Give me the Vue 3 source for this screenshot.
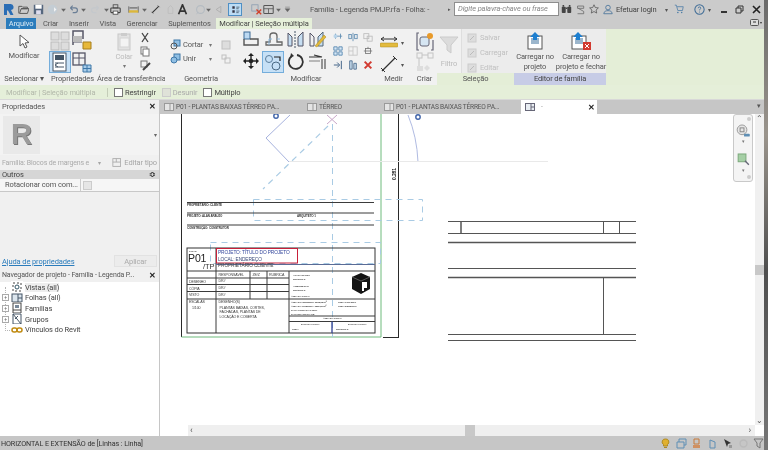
<script setup>
const caret = '<path d="M4 6h6L7 10z" fill="#666"/>'
const qat = [
  { w: 14, d: '<path d="M1 12V3h4l1 1h6v2H4l-2 6h10l2-6H4" fill="none" stroke="#555" stroke-width="1.200"/>' },
  { w: 16, d: '<rect x="1" y="1" width="12" height="12" fill="#56677e"/><rect x="3" y="1" width="8" height="5" fill="#fff"/><rect x="4" y="8" width="6" height="5" fill="#dde"/>' },
  { w: 12, d: '<circle cx="7" cy="7" r="6" fill="#c4cdd4"/><path d="M9 4l3 3-3 3z" fill="#f4f4f4"/>' },
  { w: 10, d: caret },
  { w: 10, d: '<path d="M3 5h6a3 3 0 010 6H6M3 5l3-3M3 5l3 3" fill="none" stroke="#6b7f96" stroke-width="1.500"/>' },
  { w: 10, d: caret },
  { w: 14, d: '<path d="M11 5H5a3 3 0 000 6h3M11 5L8 2M11 5L8 8" fill="none" stroke="#c4c8cc" stroke-width="1.500"/>' },
  { w: 8, d: caret },
  { w: 10, d: '<rect x="1" y="5" width="12" height="6" rx="1" fill="none" stroke="#444" stroke-width="1.400"/><rect x="4" y="1" width="6" height="4" fill="none" stroke="#444"/><rect x="4" y="9" width="6" height="4" fill="#fff" stroke="#444"/>' },
  { w: 8 },
  { w: 10, d: '<path d="M1 3v8M13 3v8" stroke="#555"/><rect x="1" y="8" width="12" height="3" fill="#dcb73a"/><path d="M2 5h10" stroke="#333"/>' },
  { w: 12, d: caret },
  { w: 10, d: '<path d="M3 11l8-8" stroke="#333" stroke-width="1.400"/><path d="M2 10l2 2M10 2l2 2" stroke="#333"/>' },
  { w: 5 },
  { w: 10, d: '<path d="M4 12V5l3-3 3 3v7z" fill="none" stroke="#bbb"/>' },
  { w: 1 },
  { w: 12, d: '<path d="M2 13L7 1l5 12M4 9h6" fill="none" stroke="#333" stroke-width="2.200"/>' },
  { w: 7 },
  { w: 10, d: '<circle cx="7" cy="7" r="5" fill="none" stroke="#b5bcc2" stroke-width="1.500"/><path d="M4 10l-2 3" stroke="#b5bcc2"/>' },
  { w: 6, d: caret },
  { w: 2 },
  { w: 10, d: '<path d="M4 7l6-4v8z" fill="none" stroke="#aaa"/>' },
  { w: 5 },
  { w: 14, on: true, d: '<path d="M3 3h3v3H3zM3 8h3v3H3z" fill="#334"/><path d="M8 4h4M8 6h3M8 9h4M8 11h3" stroke="#456"/>' },
  { w: 8 },
  { w: 12, d: '<rect x="1" y="1" width="8" height="8" fill="none" stroke="#8a9bb0"/><path d="M7 7l6 6M13 7l-6 6" stroke="#d0402a" stroke-width="1.700"/>' },
  { w: 13, d: '<rect x="1" y="2" width="12" height="10" rx="1" fill="none" stroke="#555" stroke-width="1.300"/><path d="M1 6h12M7 6v6" stroke="#555"/>' },
  { w: 6, d: caret },
  { w: 3 },
  { w: 7, d: '<path d="M4 4h6M4 6h6L7 10z" fill="#666" stroke="#666" stroke-width=".6"/>' }
]
const ribbonTabs = ['Criar', 'Inserir', 'Vista', 'Gerenciar', 'Suplementos']
const modifyIcons = [
  { d: '<rect x="2" y="2" width="6" height="7" fill="#bcd9f2" stroke="#3d6b96"/><path d="M2 9v6h14V9H8" fill="none" stroke="#555" stroke-width="1.400"/>' },
  { d: '<path d="M2 15v-3h4V6a3 3 0 013-3h1a3 3 0 013 3v6h5v3z" fill="none" stroke="#666" stroke-width="1.300"/><path d="M5 15V9h3M13 9h3" fill="none" stroke="#8db8dc"/>' },
  { d: '<path d="M2 3l4 4v9H2zM17 2l-5 5v9h5z" fill="#c6def2" stroke="#556"/><path d="M9 1v17" stroke="#456" stroke-dasharray="2 1"/>' },
  { d: '<path d="M2 3l4 4v9H2z" fill="none" stroke="#556"/><path d="M15 2l-5 5v9h5z" fill="#c6def2" stroke="#567"/><path d="M7 16l9-11 2 2-9 10z" fill="#e3b93a" stroke="#a58420" stroke-width=".5"/>' },
  { d: '<path d="M9 1l3 3H6zM9 17l3-3H6zM1 9l3-3v6zM17 9l-3-3v6z" fill="#222"/><circle cx="9" cy="9" r="2.300" fill="#222"/><path d="M4 9h10M9 4v10" stroke="#222" stroke-width="1.400"/>' },
  { on: true, d: '<circle cx="5" cy="6" r="3.500" fill="none" stroke="#5a7d9c"/><circle cx="12" cy="13" r="4" fill="none" stroke="#4b6a85"/><path d="M10 4h6v4" fill="none" stroke="#222" stroke-width="1.200"/>' },
  { d: '<path d="M11 3a7 7 0 11-5 1" fill="none" stroke="#333" stroke-width="1.800"/><path d="M5 1l3 3-4 2z" fill="#333"/>' },
  { d: '<path d="M1 5h12M6 3l8 2" stroke="#333" stroke-width="1.200"/><path d="M1 8h11v2H1z" fill="#b8b8b8"/><path d="M14 7v10M17 7v10" stroke="#555" stroke-width="1.200"/>' }
]
const smallIcons = [
  '<path d="M1 5h10M3 2v6M9 2v6" stroke="#5c8ab0"/><rect x="1" y="3" width="4" height="4" fill="#b8d4ea"/>',
  '<path d="M6 1v10" stroke="#5c8ab0"/><rect x="1" y="3" width="3" height="5" fill="none" stroke="#5c8ab0"/><rect x="8" y="3" width="3" height="5" fill="none" stroke="#5c8ab0"/>',
  '<rect x="1" y="2" width="6" height="6" fill="none" stroke="#bbb"/><rect x="5" y="5" width="6" height="6" fill="none" stroke="#bbb"/>',
  '<path d="M1 1h4v4H1zM7 1h4v4H7zM1 7h4v4H1zM7 7h4v4H7z" fill="#d8e8f6" stroke="#4e82ad"/>',
  '<rect x="1" y="1" width="10" height="10" fill="none" stroke="#c4c4c4"/><path d="M6 1v10M1 6h5" stroke="#c4c4c4"/>',
  '<rect x="3" y="3" width="6" height="6" fill="none" stroke="#777"/><path d="M1 6h10M6 1v2" stroke="#777"/>',
  '<path d="M1 6h6M5 3l3 3-3 3M10 1v10" fill="none" stroke="#46678a" stroke-width="1.200"/>',
  '<path d="M2 1h3v10H2zM7 4h3v7H7z" fill="#c8dcec" stroke="#46678a"/>',
  '<path d="M2 2l8 8M10 2l-8 8" stroke="#d23a30" stroke-width="2.400"/>'
]
const tree = [
  { label: 'Vistas (all)', box: false, selected: true, d: '<rect x="2" y="2" width="8" height="8" fill="none" stroke="#444" stroke-dasharray="2 2"/><circle cx="6" cy="6" r="2" fill="none" stroke="#356"/>' },
  { label: 'Folhas (all)', box: true, d: '<rect x="1" y="2" width="10" height="8" fill="#dce6ee" stroke="#456"/><path d="M7 2v8M7 6h4" stroke="#456"/>' },
  { label: 'Famílias', box: true, d: '<rect x="2" y="1" width="8" height="10" fill="none" stroke="#444"/><path d="M4 3h4v3H4z" fill="#789"/><path d="M2 8h8" stroke="#444"/>' },
  { label: 'Grupos', box: true, d: '<path d="M2 1h8v10H2z" fill="none" stroke="#456"/><path d="M2 1l8 10M4 6l3-3" stroke="#456"/>' },
  { label: 'Vínculos do Revit', box: false, d: '<rect x="1" y="4" width="5" height="4" rx="2" fill="none" stroke="#c08a10" stroke-width="1.500"/><rect x="6" y="4" width="5" height="4" rx="2" fill="none" stroke="#c08a10" stroke-width="1.500"/>' }
]
const docTabs = ['P01 - PLANTAS BAIXAS TÉRREO PA...', 'TÉRREO', 'P01 - PLANTAS BAIXAS TÉRREO PA...']
const statusIcons = [
  '<path d="M5.500 1a3 3 0 012 5.500V8h-4V6.500a3 3 0 012-5.500zM4 9.500h3" fill="#e0b030" stroke="#b08a20"/>',
  '<path d="M1 4h7v6H1zM3 4V1h7v6H8" fill="none" stroke="#5f8fb5"/>',
  '<path d="M3 1h5v5H3z" fill="none" stroke="#c87a3a"/><path d="M2 7h7v3H2z" fill="#d09060"/>',
  '<path d="M3 10V2l5 2v6z" fill="none" stroke="#5f8fb5"/>',
  '<path d="M2 1l3 8 1-3 3-1z" fill="#333"/><path d="M7 7h3v3H7z" fill="#999"/>',
  '<circle cx="5.500" cy="5.500" r="3.500" fill="none" stroke="#bbb" stroke-width="1.400"/>',
  '<path d="M1 1h9L7 5v5l-3-2V5z" fill="none" stroke="#777"/>'
]

// linhas do carimbo, em coordenadas da pagina
const lines = [
  [187, 202.500, 374, 202.500], [187, 213, 374, 213], [187, 225, 374, 225],
  [187, 278, 289, 278], [187, 284.500, 289, 284.500], [187, 291.500, 289, 291.500],
  [187, 299, 375, 299], [289, 316, 375, 316], [289, 321.500, 375, 321.500],
  [216, 248, 216, 333], [250, 271, 250, 299], [267, 271, 267, 299], [289, 271, 289, 333],
  [187, 271, 375, 271]
]
const rightLines = [
  [448, 221.500, 636, 221.500, 1], [448, 233.500, 636, 233.500, 1], [448, 242.500, 636, 242.500, 1.500],
  [448, 268.500, 636, 268.500, 1], [448, 277.500, 636, 277.500, 1.500], [448, 334.500, 636, 334.500, 1], [448, 340.500, 636, 340.500, 1],
  [461, 221.500, 461, 233.500, 1.500], [603.500, 221.500, 603.500, 233.500, 1], [619.500, 221.500, 619.500, 233.500, 1], [603.500, 277.500, 603.500, 334.500, 1]
]
const head = [
  [187, 206, 'PROPRIETÁRIO: CLIENTE'], [187, 217, 'PROJETO: ALAN ARAÚJO'], [297, 217, 'ARQUITETO 1'], [187, 229, 'CONSTRUÇÃO: CONSTRUTOR']
]
const tiny = [
  [189, 252, 'FOLHA'], [293, 276, 'ALAN ARAÚJO'], [293, 279.500, '10040709-6'], [293, 287, 'ARQUITETO 2'], [293, 291, '10040709-6'], [291, 296.500, 'ÁREA DA FOLHA'],
  [291, 303, 'ÁREA DO TERRENO: 1000,00 m²'], [291, 306.500, 'ÁREA DA COBERTA: 1000,00 m²'], [291, 310.500, 'TAXA OCUPAÇÃO: 50%'], [291, 314.500, 'TAXA DE APROV.: 0,5'],
  [338, 303, 'CREA PROJETO'], [338, 306.500, 'CREA DESENHO'], [323, 319, 'ÁREA DA FOLHA'], [301, 325, 'DATA DA FOLHA'], [348, 325, 'DATA DA FOLHA'], [292, 329.500, 'CREA'], [336, 329.500, '10040709-6']
]
const small = [
  [218.500, 275.500, 'RESPONSÁVEL'], [252.500, 275.500, 'ZE/Z'], [269, 275.500, 'RUBRICA'],
  [189, 282.500, 'DESENHO'], [189, 289.500, 'CÓPIA'], [189, 296, 'VISTO'],
  [218.500, 282, 'DR#'], [218.500, 289, 'DR#'], [218.500, 296, 'DR#'],
  [189, 303, 'ESCALAS'], [192, 308.500, '1/100'], [218.500, 303, 'DESENHO(S)'],
  [219.500, 308.500, 'PLANTAS BAIXAS, CORTES,'], [219.500, 313, 'FACHADAS, PLANTAS DE'], [219.500, 317.500, 'LOCAÇÃO E COBERTA']
]
</script>

<template>
  <div class="app">
    <div class="window">
      <header class="title-bar">
        <svg class="logo" width="11" height="13" viewBox="0 0 11 13"><path d="M1 1h6a3 3 0 011 6l2.500 5H7.500L5 7.500H4V12H1z" fill="#2a6db5"/></svg>
        <div class="qat">
          <span v-for="(q, i) in qat" :key="i" class="qat-item" :class="{ on: q.on }" :style="{ width: q.w + 'px' }">
            <svg v-if="q.d" width="11" height="11" viewBox="0 0 14 14" v-html="q.d"></svg>
          </span>
        </div>
        <div class="doc-title">Família - Legenda PMJP.rfa - Folha: -</div>
        <span class="search-caret">▸</span>
        <div class="search">Digite palavra-chave ou frase</div>
        <div class="top-tools">
          <svg class="t-bin" width="11" height="10" viewBox="0 0 14 12"><rect x="1" y="3" width="5" height="8" rx="1" fill="#444"/><rect x="8" y="3" width="5" height="8" rx="1" fill="#444"/><path d="M3 3V1M11 3V1M6 5h2" stroke="#444" stroke-width="2"/></svg>
          <svg class="t-a" width="10" height="11" viewBox="0 0 13 13"><path d="M2 2h8v3H2zM3 5l7 4v3H2" fill="none" stroke="#666"/></svg>
          <svg class="t-b" width="10" height="10" viewBox="0 0 13 13"><path d="M6.500 1l1.700 3.600 4 .5-3 2.700.8 4-3.500-2-3.500 2 .8-4-3-2.700 4-.5z" fill="none" stroke="#555"/></svg>
          <svg class="t-a" width="10" height="11" viewBox="0 0 13 13"><circle cx="6.500" cy="4" r="3" fill="none" stroke="#3d6b96"/><path d="M1 12c0-3 3-4 5.500-4s5.500 1 5.500 4z" fill="none" stroke="#3d6b96"/></svg>
          <span class="login">Efetuar login</span>
          <span class="caret c1">▾</span>
          <svg class="cart" width="10" height="10" viewBox="0 0 13 12"><path d="M1 1h2l2 7h6l1-5H4" fill="none" stroke="#4a7ba6"/><circle cx="5" cy="10.500" r="1" fill="#4a7ba6"/><circle cx="10" cy="10.500" r="1" fill="#4a7ba6"/></svg>
          <svg class="help" width="11" height="11" viewBox="0 0 13 13"><circle cx="6.500" cy="6.500" r="5.500" fill="none" stroke="#3d6b96" stroke-width="1.200"/><path d="M5 5a1.500 1.500 0 113 0c0 1-1.500 1-1.500 2.500M6.500 9v1" fill="none" stroke="#3d6b96"/></svg>
          <span class="caret c2">▾</span>
        </div>
        <div class="win-buttons">
          <span class="min"></span>
          <svg width="9" height="9" viewBox="0 0 9 9"><path d="M3 3V1h5v5H6M1 3h5v5H1z" fill="none" stroke="#333"/></svg>
          <svg width="9" height="9" viewBox="0 0 9 9"><path d="M1 1l7 7M8 1l-7 7" stroke="#222" stroke-width="1.600"/></svg>
        </div>
      </header>

      <nav class="ribbon-tabs">
        <span class="tab-file">Arquivo</span>
        <span v-for="t in ribbonTabs" :key="t" class="tab">{{ t }}</span>
        <span class="tab-active">Modificar | Seleção múltipla</span>
        <svg class="collapse" width="12" height="8" viewBox="0 0 12 8"><rect x=".5" y=".5" width="8" height="6" rx="1" fill="#ddd" stroke="#555"/><path d="M3 3h3" stroke="#333"/><path d="M10 3h2L11 5z" fill="#333"/></svg>
      </nav>

      <section class="ribbon">
        <div class="panel p-select">
          <div class="panel-body col-center">
            <svg class="cursor" width="11" height="15" viewBox="0 0 11 15"><path d="M1 1v11l3-2.500 2 4.500 2-1-2-4 4-.5z" fill="#fff" stroke="#555"/></svg>
            <span class="big-label">Modificar</span>
          </div>
          <div class="panel-foot">Selecionar ▾</div>
        </div>

        <div class="panel p-props">
          <div class="panel-body props-grid">
            <svg width="20" height="21" viewBox="0 0 20 21"><rect x="1" y="2" width="8" height="8" fill="#ddd" stroke="#bbb"/><rect x="11" y="2" width="8" height="8" fill="#ddd" stroke="#bbb"/><rect x="1" y="12" width="8" height="8" fill="#ddd" stroke="#bbb"/><rect x="11" y="12" width="8" height="8" fill="#ddd" stroke="#bbb"/></svg>
            <svg width="20" height="21" viewBox="0 0 20 21"><path d="M1 15V1h10v8" fill="none" stroke="#556" stroke-width="1.500"/><path d="M1 12h9" stroke="#556"/><rect x="1" y="6" width="9" height="6" fill="#bbb"/><path d="M11 12h8v7h-8z" fill="#e7b83a" stroke="#a67f1c"/></svg>
            <span class="on-box">
              <svg width="20" height="20" viewBox="0 0 20 20"><rect x="3" y="1" width="13" height="18" fill="#fff" stroke="#456"/><rect x="5" y="3" width="9" height="5" fill="#456"/><path d="M5 11h9M5 15h9M5 13l3-2M5 13l3 2" stroke="#456"/></svg>
            </span>
            <svg width="20" height="21" viewBox="0 0 20 21"><rect x="1" y="1" width="12" height="12" fill="none" stroke="#556" stroke-width="1.300"/><path d="M1 6h12M7 1v12" stroke="#556"/><path d="M11 13h8v7h-8z" fill="#a9cdea" stroke="#3f78a8"/><path d="M15 13v7M11 16.500h8" stroke="#3f78a8"/></svg>
          </div>
          <div class="panel-foot">Propriedades</div>
        </div>

        <div class="panel p-clip">
          <div class="panel-body clip-row">
            <div class="paste">
              <svg width="14" height="19" viewBox="0 0 14 19"><rect x="1" y="2" width="12" height="16" fill="#e2e2e2" stroke="#c8c8c8"/><rect x="4" y="1" width="6" height="3" fill="#ccc"/><rect x="3" y="6" width="9" height="9" fill="#f3f3f3" stroke="#d3d3d3"/></svg>
              <span>Colar</span>
              <span class="tiny-caret">▾</span>
            </div>
            <div class="clip-tools">
              <svg width="10" height="11" viewBox="0 0 10 11"><path d="M2 1l6 9M8 1L2 10" stroke="#444" stroke-width="1.300"/></svg>
              <svg width="10" height="11" viewBox="0 0 10 11"><rect x="1" y="1" width="6" height="7" fill="#fff" stroke="#777"/><rect x="3" y="3" width="6" height="7" fill="#fff" stroke="#777"/></svg>
              <svg width="11" height="11" viewBox="0 0 11 11"><rect x="1" y="1" width="6" height="6" fill="none" stroke="#777"/><path d="M3 10l7-7" stroke="#444" stroke-width="2"/></svg>
            </div>
          </div>
          <div class="panel-foot">Área de transferência</div>
        </div>

        <div class="panel p-geo">
          <div class="panel-body geo-rows">
            <div class="geo-row">
              <svg width="11" height="11" viewBox="0 0 11 11"><rect x="4" y="1" width="6" height="6" fill="#8fbfe4" stroke="#3f78a8"/><circle cx="4" cy="7" r="3" fill="none" stroke="#555"/></svg>
              <span class="geo-name">Cortar</span><span class="tiny-caret">▾</span>
              <svg class="geo-end" width="10" height="10" viewBox="0 0 10 10"><rect x="1" y="1" width="8" height="8" fill="#ddd" stroke="#c0c0c0"/></svg>
            </div>
            <div class="geo-row">
              <svg width="11" height="11" viewBox="0 0 11 11"><rect x="4" y="1" width="6" height="6" fill="#8fbfe4" stroke="#3f78a8"/><circle cx="4" cy="7" r="3" fill="#8fbfe4" stroke="#3f78a8"/></svg>
              <span class="geo-name">Unir</span><span class="tiny-caret">▾</span>
              <svg class="geo-end" width="10" height="10" viewBox="0 0 10 10"><rect x="1" y="1" width="4" height="4" fill="none" stroke="#c0c0c0"/><rect x="4" y="4" width="5" height="5" fill="none" stroke="#c0c0c0"/></svg>
            </div>
          </div>
          <div class="panel-foot">Geometria</div>
        </div>

        <div class="panel p-mod">
          <div class="panel-body mod-row">
            <div class="mod-grid">
              <span v-for="(m, i) in modifyIcons" :key="i" class="mod-cell" :class="{ 'on-box': m.on }">
                <svg width="19" height="19" viewBox="0 0 19 19" v-html="m.d"></svg>
              </span>
            </div>
            <div class="small-grid">
              <svg v-for="(s, i) in smallIcons" :key="i" width="10" height="10" viewBox="0 0 12 12" v-html="s"></svg>
            </div>
          </div>
          <div class="panel-foot">Modificar</div>
        </div>

        <div class="panel p-measure">
          <div class="panel-body measure-col">
            <span class="m-row">
              <svg width="18" height="14" viewBox="0 0 18 14"><path d="M1 4h16M1 4l3-2M1 4l3 2M17 4l-3-2M17 4l-3 2" fill="none" stroke="#333"/><rect x="0" y="8" width="18" height="4" rx="1" fill="#e3bb3e" stroke="#a98a20" stroke-width=".5"/></svg>
              <i>▾</i>
            </span>
            <span class="m-row">
              <svg width="18" height="18" viewBox="0 0 18 18"><path d="M2 16L15 3" stroke="#333" stroke-width="1.200"/><path d="M1 13l4 4M13 1l4 4" stroke="#333"/></svg>
              <i>▾</i>
            </span>
          </div>
          <div class="panel-foot">Medir</div>
        </div>

        <div class="panel p-create">
          <div class="panel-body col-center">
            <svg width="18" height="19" viewBox="0 0 18 19"><path d="M3 1H1v17h2M15 18h2V8" fill="none" stroke="#667" stroke-width="1.200"/><rect x="4" y="5" width="9" height="9" rx="2" fill="#d6e6f3" stroke="#667"/><circle cx="14" cy="4" r="3" fill="#e89a2a"/></svg>
            <svg class="create-sub" width="18" height="20" viewBox="0 0 18 20"><rect x="1" y="1" width="5" height="5" fill="none" stroke="#c4c4c4"/><rect x="12" y="1" width="5" height="5" fill="none" stroke="#c4c4c4"/><rect x="1" y="14" width="6" height="5" fill="#ddd"/><path d="M11 13l3 3-3 3-3-3z" fill="#ddd"/><path d="M6 3h6M3 6v8" stroke="#c4c4c4"/></svg>
          </div>
          <div class="panel-foot">Criar</div>
        </div>

        <div class="panel p-selection">
          <div class="panel-body sel-row">
            <div class="filter">
              <svg width="20" height="20" viewBox="0 0 20 20"><path d="M1 2h18l-7 8v8l-4-3v-5z" fill="#dcdcdc" stroke="#cbcbcb"/></svg>
              <span>Filtro</span>
            </div>
            <div class="sel-list">
              <span v-for="l in ['Salvar', 'Carregar', 'Editar']" :key="l" class="sel-item">
                <svg width="10" height="10" viewBox="0 0 10 10"><rect x="1" y="1" width="8" height="8" fill="#ddd" stroke="#ccc"/><path d="M3 7l4-4" stroke="#bbb"/></svg>{{ l }}
              </span>
            </div>
          </div>
          <div class="panel-foot green">Seleção</div>
        </div>

        <div class="panel p-family">
          <div class="panel-body fam-row">
            <div class="fam-btn">
              <svg width="17" height="18" viewBox="0 0 17 18"><rect x="1" y="4" width="14" height="13" fill="#fff" stroke="#555"/><rect x="4" y="6" width="8" height="6" fill="#9cb6cc"/><path d="M8 0l5 5h-3v3H6V5H3z" fill="#1e7fd0"/></svg>
              <span>Carregar no<br>projeto</span>
            </div>
            <div class="fam-btn">
              <svg width="20" height="18" viewBox="0 0 20 18"><rect x="1" y="4" width="14" height="13" fill="#fff" stroke="#555"/><rect x="4" y="6" width="8" height="6" fill="#9cb6cc"/><path d="M7 0l5 5H9v3H5V5H2z" fill="#1e7fd0"/><rect x="12" y="10" width="8" height="8" fill="#d23a30"/><path d="M14 12l4 4M18 12l-4 4" stroke="#fff"/></svg>
              <span>Carregar no<br>projeto e fechar</span>
            </div>
          </div>
          <div class="panel-foot violet">Editor de família</div>
        </div>
      </section>

      <div class="options">
        <span class="opt-title">Modificar | Seleção múltipla</span>
        <label class="opt"><i class="check"></i>Restringir</label>
        <label class="opt off"><i class="check"></i>Desunir</label>
        <label class="opt"><i class="check"></i>Múltiplo</label>
      </div>

      <main class="main">
        <aside class="side">
          <div class="side-head">Propriedades<b>✕</b></div>
          <div class="type-box">
            <div class="thumb">R</div>
            <span class="type-caret">▾</span>
          </div>
          <div class="type-row">
            <span class="fam-name">Família: Blocos de margens e</span>
            <span class="type-drop">▾</span>
            <svg width="11" height="11" viewBox="0 0 11 11"><rect x="1" y="1" width="9" height="9" fill="none" stroke="#aaa"/><path d="M1 5h9M5 1v4" stroke="#aaa"/></svg>
            <span>Editar tipo</span>
          </div>
          <div class="group-head">Outros<b>≎</b></div>
          <div class="prop-row"><span class="prop-name">Rotacionar com com...</span><span class="prop-val"><i></i></span></div>
          <div class="prop-fill"></div>
          <div class="prop-foot">
            <a class="help-link">Ajuda de propriedades</a>
            <span class="apply">Aplicar</span>
          </div>
          <div class="nav-head">Navegador de projeto - Família - Legenda P...<b>✕</b></div>
          <ul class="tree">
            <li v-for="t in tree" :key="t.label">
              <i v-if="t.box" class="plus">+</i>
              <i v-else class="plus-blank"></i>
              <svg width="12" height="12" viewBox="0 0 12 12" v-html="t.d"></svg>
              <span :class="{ sel: t.selected }">{{ t.label }}</span>
            </li>
          </ul>
        </aside>

        <div class="work">
          <div class="doc-tabs">
            <span v-for="(t, i) in docTabs" :key="i" class="doc-tab" :class="'dt' + i">
              <svg width="10" height="10" viewBox="0 0 10 10"><rect x=".5" y="1.500" width="9" height="7" fill="#e4e4e4" stroke="#999"/><path d="M6 1.500v7" stroke="#999"/></svg>{{ t }}
            </span>
            <span class="doc-tab active">
              <svg width="10" height="10" viewBox="0 0 10 10"><rect x=".5" y="1.500" width="9" height="7" fill="#e8edf2" stroke="#667"/><path d="M6 1.500v7M6 5h3.500" stroke="#667"/></svg>
              <em>-</em><b>✕</b>
            </span>
            <span class="tabs-menu">▾</span>
          </div>
          <div class="view-row">
            <div class="view">
              <svg class="sheet" width="595" height="311" viewBox="160 114 595 311">
                <path d="M181.500 114V337M398.500 114V337M383 337.500H399" stroke="#2a2a2a" fill="none"/>
                <path d="M381 114V337H181.500" stroke="#6fbb7c" fill="none"/>
                <path d="M290 115L266 138L289 162" stroke="#a7b3de" fill="none"/>
                <path d="M408 115Q417 137 418 162" stroke="#b0bbe2" fill="none"/>
                <path d="M289 161.500H548" stroke="#e9e9e9"/>
                <path d="M328 126L263 189" stroke="#a9cbe4" stroke-dasharray="6 5" stroke-width="1.200"/>
                <path d="M332.500 124V337" stroke="#a9cbe4" stroke-dasharray="6 5"/>
                <path d="M327 115l10 9M337 115l-10 9" stroke="#c9a7c9"/>
                <circle cx="276" cy="116" r="2.200" fill="none" stroke="#3f63a8" stroke-width="1.400"/>
                <circle cx="418" cy="117" r="2.200" fill="none" stroke="#3f63a8" stroke-width="1.400"/>
                <rect x="253.500" y="199.500" width="169" height="21" fill="none" stroke="#a9cbe4" stroke-dasharray="6 5"/>
                <rect x="210.500" y="242.500" width="170" height="21" fill="none" stroke="#a9cbe4" stroke-dasharray="6 5"/>
                <text x="0" y="0" transform="translate(395.500 180) rotate(-90)" class="dim">0.281</text>

                <path v-for="(l, i) in lines" :key="i" :d="`M${l[0]} ${l[1]}L${l[2]} ${l[3]}`" stroke="#3b3b3b"/>
                <rect x="187" y="248" width="188" height="85" fill="none" stroke="#333"/>
                <path d="M216 264.500H375" stroke="#5a6c96"/>
                <path d="M332 321.500V333" stroke="#2f3f92" stroke-width="1.300"/>
                <rect x="216.500" y="248.500" width="81" height="14.500" fill="none" stroke="#c8203a"/>
                <text v-for="(t, i) in head" :key="'h' + i" :x="t[0]" :y="t[1]" class="head">{{ t[2] }}</text>
                <text v-for="(t, i) in tiny" :key="'t' + i" :x="t[0]" :y="t[1]" class="tiny">{{ t[2] }}</text>
                <text v-for="(t, i) in small" :key="'s' + i" :x="t[0]" :y="t[1]" class="small">{{ t[2] }}</text>
                <text x="188" y="262" class="p01">P01</text>
                <text x="203" y="269" class="tp">/TP</text>
                <text x="218" y="254" class="blue">PROJETO: TÍTULO DO PROJETO</text>
                <text x="218" y="260.700" class="blue dark">LOCAL: ENDEREÇO</text>
                <text x="218" y="267.300" class="blue dark2">PROPRIETÁRIO CLIENTE</text>
                <path d="M361 273l9 4v12l-9 5-9-5v-12z" fill="#141414"/>
                <path d="M362 282h5v6h-3v3h-2z" fill="#fff"/>
                <path d="M352 277l9 4 9-4" stroke="#555" fill="none"/>

                <path v-for="(l, i) in rightLines" :key="'r' + i" :d="`M${l[0]} ${l[1]}L${l[2]} ${l[3]}`" stroke="#555" :stroke-width="l[4]"/>
              </svg>
              <div class="nav-bar">
                <i class="nb-dot"></i>
                <svg width="14" height="14" viewBox="0 0 14 14"><circle cx="6" cy="6" r="5" fill="#e6e6e6" stroke="#9a9a9a"/><rect x="4" y="4" width="4" height="4" fill="none" stroke="#888"/><rect x="8" y="10" width="6" height="3" rx="1" fill="#5f8fb5"/></svg>
                <span class="nb-caret">▾</span>
                <svg class="nb-zoom" width="13" height="13" viewBox="0 0 13 13"><rect x="1" y="1" width="8" height="8" fill="#a5cfa5" stroke="#7aa87a"/><path d="M8 8l4 4" stroke="#667" stroke-width="1.400"/></svg>
                <span class="nb-caret">▾</span>
                <i class="nb-dot end"></i>
              </div>
            </div>
            <div class="v-scroll">
              <span class="chev">⌃</span>
              <i class="v-thumb"></i>
              <span class="chev">⌄</span>
            </div>
          </div>
          <div class="h-scroll">
            <span class="arrow">‹</span>
            <i class="h-thumb"></i>
            <span class="arrow">›</span>
          </div>
        </div>
      </main>

      <footer class="status">
        <span>HORIZONTAL E EXTENSÃO de [Linhas : Linha]</span>
        <div class="status-icons">
          <svg v-for="(s, i) in statusIcons" :key="i" width="11" height="11" viewBox="0 0 11 11" v-html="s"></svg>
        </div>
      </footer>
    </div>
    <div class="edge"></div>
  </div>
</template>

<style>
html, body { margin: 0; background: #fff; overflow: hidden; }
</style>

<style scoped>
.app {
  width: 768px;
  height: 450px;
  display: flex;
  overflow: hidden;
  font-family: Roboto, "Noto Sans", sans-serif;
  font-size: 7.5px;
  letter-spacing: -0.12px;
  color: #444;
  filter: blur(0.4px);
  background: #fff;
}
.window { width: 764px; flex: none; display: flex; flex-direction: column; }
.edge { width: 4px; flex: none; background: linear-gradient(#6a6a6a, #9a948c 30%, #4f4f4f 60%, #777); }
.title-bar {
  height: 18px;
  flex: none;
  display: flex;
  align-items: center;
  background: #cbcbcb;
  padding-left: 3px;
  box-sizing: border-box;
}
.logo { flex: none; margin-right: 2px; }
.qat { display: flex; align-items: center; width: 294px; flex: none; }
.qat-item { display: flex; justify-content: center; align-items: center; height: 13px; flex: none; }
.qat-item svg { flex: none; }
.qat-item.on { background: #bcdcf4; outline: 1px solid #4f8fc4; outline-offset: -1px; }
.doc-title { width: 135px; flex: none; color: #555; font-size: 7.7px; white-space: nowrap; }
.search-caret { flex: none; width: 6px; font-size: 5px; color: #555; margin-left: 3px; }
.search {
  width: 105px;
  height: 14px;
  flex: none;
  box-sizing: border-box;
  background: #fff;
  border: 1px solid #8e8e8e;
  font-style: italic;
  color: #888;
  line-height: 12px;
  padding-left: 3px;
  white-space: nowrap;
  overflow: hidden;
}
.top-tools { display: flex; align-items: center; padding-left: 2px; flex: none; }
.t-a { margin-left: 4px; }
.t-b { margin-left: 3px; }
.login { width: 40px; margin-left: 3px; color: #444; white-space: nowrap; }
.caret { font-size: 6px; color: #555; }
.c1 { margin-left: 9px; }
.c2 { margin-left: 3px; }
.cart { margin-left: 6px; }
.help { margin-left: 10px; }
.win-buttons { margin-left: auto; margin-right: 3px; display: flex; align-items: center; gap: 8px; }
.min { width: 6px; height: 2px; background: #333; margin-top: 6px; }

.ribbon-tabs {
  height: 11px;
  flex: none;
  display: flex;
  align-items: stretch;
  background: #cbcbcb;
  position: relative;
  line-height: 11px;
}
.tab-file {
  width: 30px;
  margin-left: 6px;
  background: #2b7cbc;
  color: #dcebf5;
  text-align: center;
}
.tab { padding: 0 5.300px; color: #555; white-space: nowrap; }
.tab-file + .tab { padding-left: 7px; }
.tab-active {
  margin-left: 0;
  width: 96px;
  background: #e6f0da;
  color: #444;
  text-align: center;
  white-space: nowrap;
}
.collapse { position: absolute; right: 2px; top: 1px; }

.ribbon {
  height: 56px;
  flex: none;
  display: flex;
  background: #e4eed7;
}
.panel { display: flex; flex-direction: column; flex: none; background: #f1f1f1; }
.panel-body { flex: 1; min-height: 0; }
.panel-foot { height: 12px; line-height: 11px; text-align: center; white-space: nowrap; color: #555; }
.panel-foot.green { background: #e4eed7; }
.panel-foot.violet { background: #c7cce6; color: #444; }
.p-select { width: 48px; }
.p-props { width: 49px; }
.p-clip { width: 68px; }
.p-geo { width: 72px; }
.p-mod { width: 138px; }
.p-measure { width: 37px; }
.p-create { width: 25px; }
.p-selection { width: 77px; }
.p-family { width: 92px; }
.p-selection .panel-body, .p-family .panel-body { background: #ececec; }

.col-center { display: flex; flex-direction: column; align-items: center; }
.cursor { margin-top: 5px; }
.big-label { margin-top: 2px; color: #555; }
.props-grid { display: grid; grid-template-columns: 22px 22px; grid-auto-rows: 22px; padding: 0 0 0 1px; place-items: center; }
.on-box { background: #c6e0f6; outline: 1px solid #74addb; outline-offset: -1px; display: flex; align-items: center; justify-content: center; width: 22px; height: 22px; }
.clip-row { display: flex; padding: 3px 0 0 18px; }
.paste { display: flex; flex-direction: column; align-items: center; width: 18px; color: #bbb; line-height: 9px; }
.paste span:first-of-type { margin-top: 1px; }
.tiny-caret { font-size: 6px; color: #777; }
.clip-tools { display: flex; flex-direction: column; gap: 3px; margin-left: 7px; }
.geo-rows { display: flex; flex-direction: column; gap: 3px; padding: 10px 0 0 5px; }
.geo-row { display: flex; align-items: center; gap: 2px; height: 11px; color: #555; }
.geo-name { width: 24px; }
.geo-end { margin-left: 7px; }
.mod-row { display: flex; padding: 0 0 0 3px; }
.mod-grid { display: grid; grid-template-columns: repeat(4, 22px); grid-auto-rows: 22px; place-items: center; }
.small-grid { display: grid; grid-template-columns: 15px 15px 12px; grid-auto-rows: 14px; margin: 3px 0 0 5px; }
.measure-col { display: flex; flex-direction: column; gap: 6px; padding: 6px 0 0 5px; }
.m-row { display: flex; align-items: center; gap: 3px; }
.m-row i { font-size: 6px; font-style: normal; color: #555; }
.create-sub { margin-top: 1px; }
.p-create .panel-body { padding-top: 3px; }
.sel-row { display: flex; height: 100%; }
.filter { width: 25px; display: flex; flex-direction: column; align-items: center; color: #bbb; padding-top: 6px; gap: 4px; border-right: 1px solid #dedede; box-sizing: border-box; background: #f1f1f1; }
.sel-list { display: flex; flex-direction: column; gap: 4px; padding: 3px 0 0 5px; color: #c0c0c0; }
.sel-item { display: flex; align-items: center; gap: 3px; height: 11px; }
.fam-row { display: flex; padding-top: 3px; }
.fam-btn { display: flex; flex-direction: column; align-items: center; text-align: center; line-height: 10px; color: #555; white-space: nowrap; }
.fam-btn:first-child { width: 42px; }
.fam-btn:last-child { width: 50px; }
.fam-btn span { margin-top: 2px; }

.options {
  height: 15px;
  flex: none;
  display: flex;
  align-items: center;
  background: #e5efd9;
  border-bottom: 1px solid #d8d8d8;
  box-sizing: border-box;
}
.opt-title { width: 108px; flex: none; padding-left: 6px; box-sizing: border-box; color: #b2b8aa; white-space: nowrap; border-right: 1px solid #c4cdb8; }
.opt { display: flex; align-items: center; gap: 2px; margin-left: 6px; color: #444; }
.opt.off { color: #aaa; }
.opt.off .check { background: #dfe2d8; border-color: #ccc; }
.check { width: 7px; height: 7px; background: #fff; border: 1px solid #777; display: block; }

.main { flex: 1; min-height: 0; display: flex; }
.side { width: 160px; flex: none; display: flex; flex-direction: column; background: #f0f0f0; border-right: 1px solid #c6c6c6; box-sizing: border-box; }
.side-head { height: 14px; line-height: 14px; display: flex; justify-content: space-between; padding: 0 3px 0 2px; color: #555; }
.side-head b, .nav-head b, .doc-tab b { font-size: 8px; color: #222; }
.type-box { height: 41px; display: flex; align-items: center; justify-content: space-between; padding: 0 2px 0 3px; background: #f3f3f3; }
.thumb {
  width: 37px;
  height: 38px;
  background: #e9e9e9;
  color: #9b9b9b;
  font: 700 29px "Liberation Sans", sans-serif;
  text-align: center;
  line-height: 36px;
  text-shadow: 1px 1px 0 #777;
}
.type-caret { font-size: 6px; color: #666; }
.type-row { height: 15px; display: flex; align-items: center; gap: 3px; padding: 0 2px; color: #a5a5a5; white-space: nowrap; }
.fam-name { width: 91px; color: #aaa; flex: none; font-size: 7px; letter-spacing: -0.15px; }
.type-drop { font-size: 6px; margin: 0 8px 0 2px; }
.group-head { height: 9px; line-height: 9px; background: #d6d6d6; display: flex; justify-content: space-between; padding: 0 3px 0 2px; color: #444; }
.prop-row { height: 12px; line-height: 12px; display: flex; background: #f6f6f6; border-bottom: 1px solid #c8c8c8; padding-left: 5px; color: #555; white-space: nowrap; }
.prop-name { width: 75px; flex: none; }
.prop-val { flex: 1; border-left: 1px solid #ccc; padding: 2px 0 0 2px; }
.prop-val i { display: block; width: 7px; height: 7px; background: #e6e6e6; border: 1px solid #ccc; }
.prop-fill { flex: none; height: 62px; }
.prop-foot { height: 14px; display: flex; justify-content: space-between; align-items: center; padding: 0 2px; }
.help-link { color: #2a7cbc; text-decoration: underline; white-space: nowrap; }
.apply { width: 43px; height: 12px; line-height: 12px; text-align: center; color: #aaa; background: #ececec; border: 1px solid #e2e2e2; box-sizing: border-box; }
.nav-head { height: 13px; line-height: 13px; margin-top: 1px; display: flex; justify-content: space-between; padding: 0 3px 0 2px; color: #555; white-space: nowrap; font-size: 7px; }
.tree { flex: 1; margin: 0; padding: 0 0 0 2px; list-style: none; background: #fff; position: relative; }
.tree::before { content: ""; position: absolute; left: 5px; top: 5px; width: 6px; height: 43px; border-left: 1px dotted #b5b5b5; border-bottom: 1px dotted #b5b5b5; }
.tree li { height: 10.600px; display: flex; align-items: center; gap: 2px; color: #444; position: relative; }
.tree li svg { background: #fff; }
.plus { width: 5px; height: 5px; border: 1px solid #aaa; font-size: 5px; line-height: 5px; text-align: center; font-style: normal; color: #666; background: #fff; }
.plus-blank { width: 7px; }
.sel { background: #eeeeee; }

.work { flex: 1; min-width: 0; display: flex; flex-direction: column; }
.doc-tabs { height: 14px; flex: none; display: flex; background: #c6c6c6; font-size: 6.600px; letter-spacing: -0.2px; position: relative; color: #555; }
.doc-tab { display: flex; align-items: center; gap: 2px; white-space: nowrap; box-sizing: border-box; }
.dt0 { width: 143px; padding-left: 4px; }
.dt1 { width: 75px; padding-left: 4px; }
.dt2 { width: 143px; padding-left: 6px; }
.doc-tab.active { width: 76px; background: #fff; padding-left: 4px; }
.doc-tab.active em { flex: 1; font-style: normal; padding-left: 4px; color: #999; }
.doc-tab.active b { margin-right: 2px; }
.tabs-menu { position: absolute; right: 3px; top: 2px; font-size: 7px; }
.view-row { flex: 1; min-height: 0; display: flex; }
.view { flex: 1; position: relative; background: #fff; min-width: 0; overflow: hidden; }
.sheet { display: block; }
.dim { font: 700 5px "Liberation Sans", sans-serif; fill: #222; }
.head { font: 700 3px "Liberation Sans", sans-serif; fill: #333; }
.tiny { font: 700 2.500px "Liberation Sans", sans-serif; fill: #333; }
.small { font: 3.600px "Liberation Sans", sans-serif; fill: #3a3a3a; }
.p01 { font: 10.500px "Liberation Sans", sans-serif; fill: #222; }
.tp { font: 7.500px "Liberation Sans", sans-serif; fill: #333; }
.blue { font: 4.800px "Liberation Sans", sans-serif; fill: #34479c; }
.blue.dark { fill: #3a4a7a; }
.blue.dark2 { fill: #444; }
.nav-bar {
  position: absolute;
  right: 2px;
  top: 0;
  width: 20px;
  height: 68px;
  box-sizing: border-box;
  background: #f4f4f4;
  border: 1px solid #c9c9c9;
  border-radius: 3px;
  display: flex;
  flex-direction: column;
  align-items: center;
  padding: 2px 0;
}
.nb-dot { width: 4px; height: 4px; border-radius: 50%; background: #ccc; align-self: flex-end; margin-right: 1px; margin-bottom: 3px; }
.nb-dot.end { margin: auto 1px 0 0; }
.nb-caret { font-size: 5px; color: #777; line-height: 9px; }
.nb-zoom { margin-top: 7px; }
.v-scroll { width: 9px; flex: none; background: #f0f0f0; display: flex; flex-direction: column; justify-content: space-between; align-items: center; position: relative; color: #555; font-size: 8px; }
.chev { line-height: 9px; }
.v-thumb { position: absolute; left: 0; top: 151px; width: 9px; height: 10px; background: #c8c8c8; }
.h-scroll { height: 11px; flex: none; background: #efefef; margin-right: 9px; margin-left: 28px; position: relative; display: flex; justify-content: space-between; align-items: center; padding: 0 4px 0 2px; color: #555; font-size: 9px; line-height: 9px; }
.h-thumb { position: absolute; left: 277px; top: 0; width: 10px; height: 11px; background: #c8c8c8; }

.status { height: 14px; flex: none; display: flex; align-items: center; justify-content: space-between; background: #c6c6c6; color: #333; font-size: 7.200px; letter-spacing: -0.1px; white-space: nowrap; padding-left: 1px; }
.status-icons { display: flex; gap: 4.500px; }
</style>
